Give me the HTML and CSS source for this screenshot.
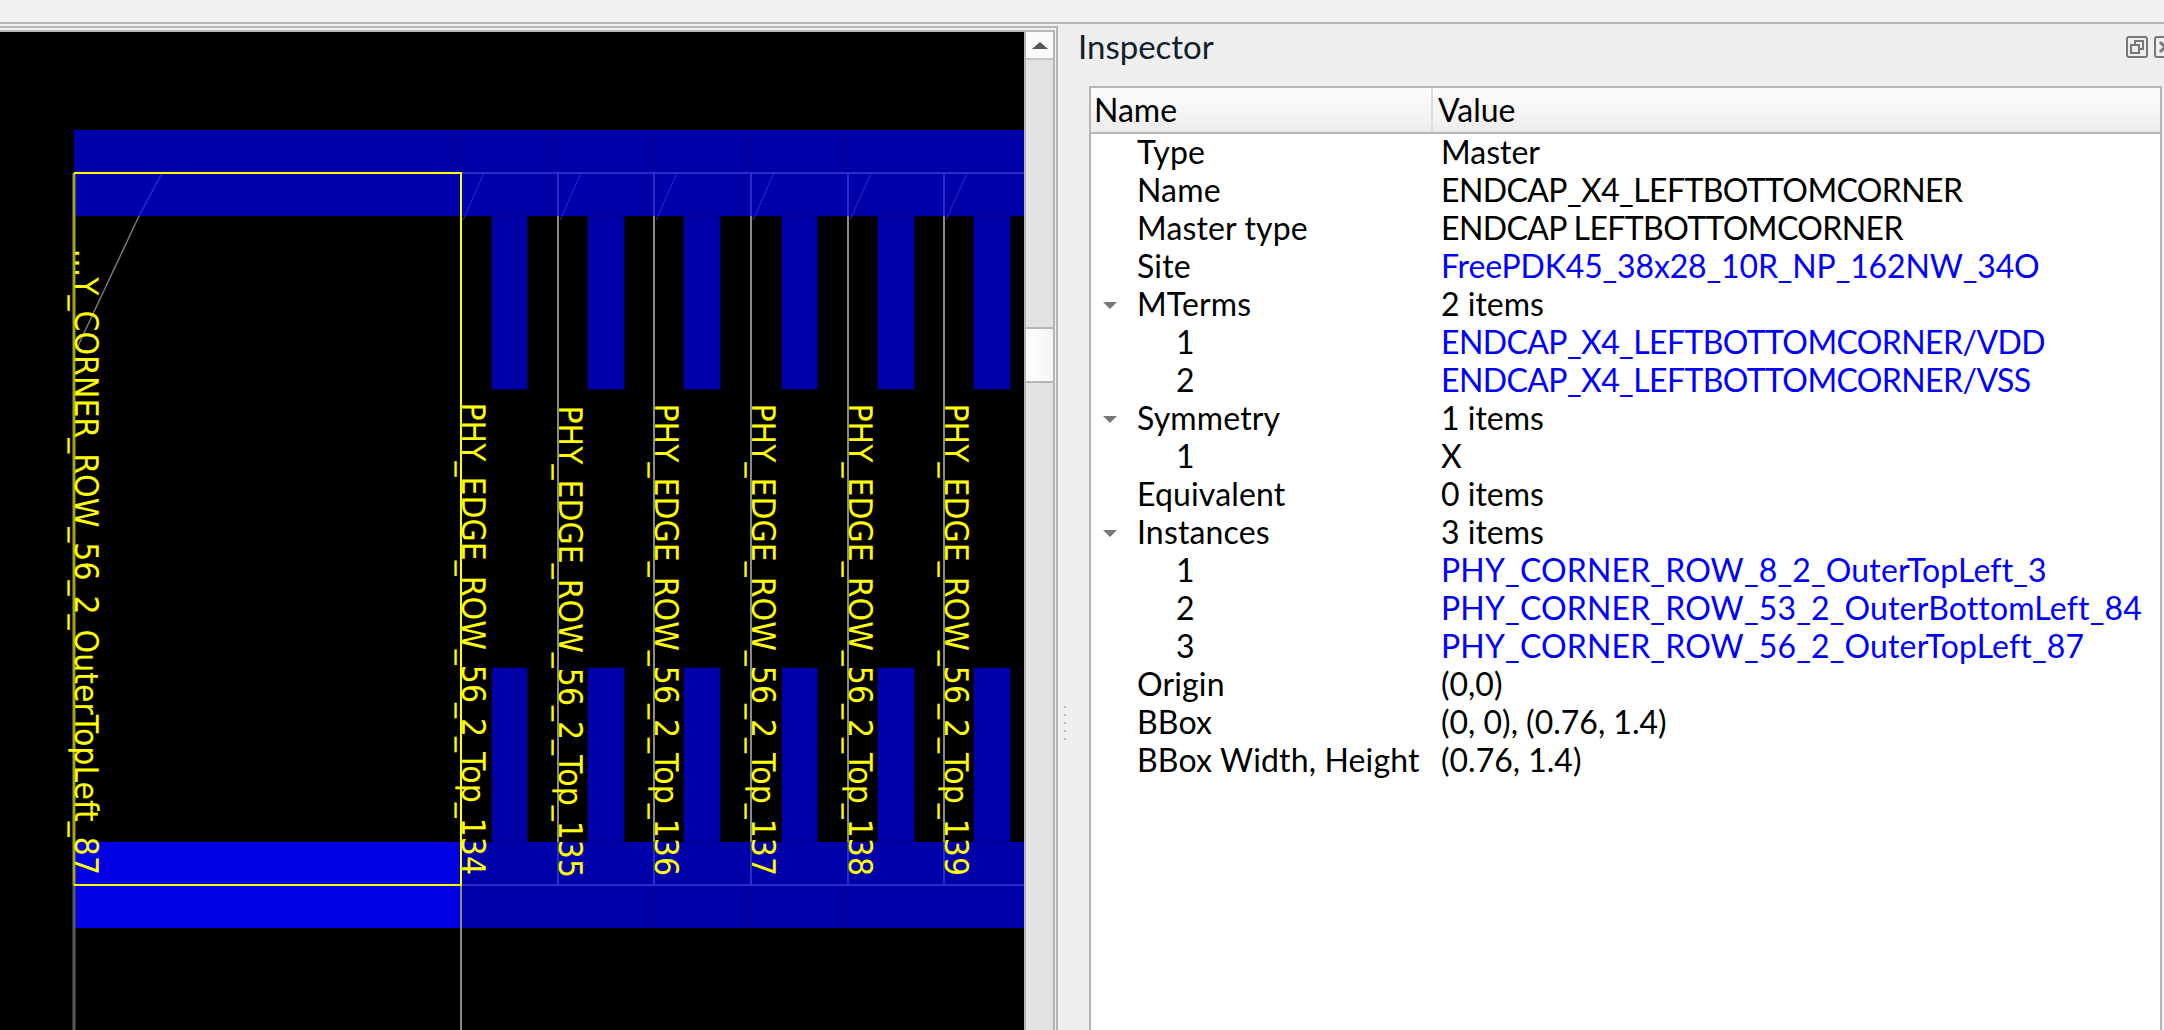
FILE: index.html
```html
<!DOCTYPE html>
<html lang="en">
<head>
    <meta charset="UTF-8">
    <title>Inspector</title>
    <link rel="stylesheet" href="styles.css">
</head>
<body>
    <div class="toolbar"></div>

    <div class="main">
        <div class="viewer">
            <div class="viewer-frame">
                <div class="viewer-inner">
                    <svg class="layout" viewBox="0 32 1024 998" width="1024" height="998">
                        <!-- power rails -->
                        <rect class="metal" x="74" y="130" width="950" height="86"/>
                        <rect class="metal" x="74" y="842" width="950" height="86"/>
                        <rect class="metal-hi" x="74" y="842" width="387" height="86"/>

                        <!-- fingers, top -->
                        <rect class="finger" x="492" y="216" width="35" height="173"/>
                        <rect class="finger" x="588" y="216" width="36" height="173"/>
                        <rect class="finger" x="684" y="216" width="36" height="173"/>
                        <rect class="finger" x="782" y="216" width="35" height="173"/>
                        <rect class="finger" x="878" y="216" width="36" height="173"/>
                        <rect class="finger" x="974" y="216" width="36" height="173"/>

                        <!-- fingers, bottom -->
                        <rect class="finger" x="492" y="668" width="35" height="174"/>
                        <rect class="finger" x="588" y="668" width="36" height="174"/>
                        <rect class="finger" x="684" y="668" width="36" height="174"/>
                        <rect class="finger" x="782" y="668" width="35" height="174"/>
                        <rect class="finger" x="878" y="668" width="36" height="174"/>
                        <rect class="finger" x="974" y="668" width="36" height="174"/>

                        <!-- faint seams in the rails -->
                        <path class="seam" d="M461 130V173M557 130V173M654 130V173M751 130V173M847 130V173M654 885V928M751 885V928M847 885V928M461 885V928"/>

                        <!-- instance outlines -->
                        <path class="outline" d="M558 216V842M654 216V842M751 216V842M848 216V842M944 216V842"/>
                        <path class="outline-blue" d="M558 173V216M654 173V216M751 173V216M848 173V216M944 173V216M558 842V885M654 842V885M751 842V885M848 842V885M944 842V885M461 173H1024M461 885H1024"/>
                        <path class="tick" d="M484 173L463 220M581 173L560 220M677 173L656 220M774 173L753 220M871 173L850 220M967 173L946 220"/>
                        <path class="outline" d="M461 216V1030"/>
                        <path class="outline-dim" d="M74 885V1030"/>
                        <path class="diag-blue" d="M162 173L139 216"/>
                        <path class="diag" d="M139 216L77 348"/>

                        <!-- selected instance -->
                        <path class="select-dim" d="M74 173V885"/>
                        <path class="select" d="M74 173H461V885H74"/>

                        <text class="label" text-anchor="end" transform="translate(75 875) rotate(90) scale(1 1.08)">...Y_CORNER_ROW_56_2_OuterTopLeft_87</text>
                        <text class="label" text-anchor="end" transform="translate(462 875) rotate(90) scale(1 1.08)">PHY_EDGE_ROW_56_2_Top_134</text>
                        <text class="label" text-anchor="end" transform="translate(559 878) rotate(90) scale(1 1.08)">PHY_EDGE_ROW_56_2_Top_135</text>
                        <text class="label" text-anchor="end" transform="translate(655 876) rotate(90) scale(1 1.08)">PHY_EDGE_ROW_56_2_Top_136</text>
                        <text class="label" text-anchor="end" transform="translate(752 876) rotate(90) scale(1 1.08)">PHY_EDGE_ROW_56_2_Top_137</text>
                        <text class="label" text-anchor="end" transform="translate(849 876) rotate(90) scale(1 1.08)">PHY_EDGE_ROW_56_2_Top_138</text>
                        <text class="label" text-anchor="end" transform="translate(945 876) rotate(90) scale(1 1.08)">PHY_EDGE_ROW_56_2_Top_139</text>
                    </svg>
                    <div class="scrollbar">
                        <div class="scroll-up"><span class="arrow-up"></span></div>
                        <div class="scroll-track"></div>
                        <div class="scroll-handle"></div>
                        <div class="scroll-rest"></div>
                    </div>
                </div>
            </div>
        </div>

        <div class="dock">
            <div class="splitter">
                <span></span><span></span><span></span><span></span><span></span>
            </div>
            <div class="dock-body">
                <div class="dock-title">
                    <span class="title-text">Inspector</span>
                    <div class="dock-buttons">
                        <svg width="22" height="22" viewBox="0 0 22 22">
                            <rect class="btn-line" x="1" y="1" width="20" height="20" rx="2"/>
                            <path class="btn-line" d="M9 8V5H17V13H13M5 9H13V17H5Z"/>
                        </svg>
                        <svg width="22" height="22" viewBox="0 0 22 22">
                            <rect class="btn-line" x="1" y="1" width="20" height="20" rx="2"/>
                            <path class="btn-x" d="M6 6L16 16M16 6L6 16"/>
                        </svg>
                    </div>
                </div>
                <div class="tree">
                    <div class="tree-head">
                        <div class="head-name">Name</div>
                        <div class="head-value">Value</div>
                    </div>
                    <div class="row"><div class="name">Type</div><div class="value">Master</div></div>
                    <div class="row"><div class="name">Name</div><div class="value caps">ENDCAP_X4_LEFTBOTTOMCORNER</div></div>
                    <div class="row"><div class="name">Master type</div><div class="value caps">ENDCAP LEFTBOTTOMCORNER</div></div>
                    <div class="row"><div class="name">Site</div><div class="value link site">FreePDK45_38x28_10R_NP_162NW_34O</div></div>
                    <div class="row"><div class="name"><span class="caret"></span>MTerms</div><div class="value">2 items</div></div>
                    <div class="row"><div class="name child">1</div><div class="value link caps">ENDCAP_X4_LEFTBOTTOMCORNER/VDD</div></div>
                    <div class="row"><div class="name child">2</div><div class="value link caps">ENDCAP_X4_LEFTBOTTOMCORNER/VSS</div></div>
                    <div class="row"><div class="name"><span class="caret"></span>Symmetry</div><div class="value">1 items</div></div>
                    <div class="row"><div class="name child">1</div><div class="value">X</div></div>
                    <div class="row"><div class="name">Equivalent</div><div class="value">0 items</div></div>
                    <div class="row"><div class="name"><span class="caret"></span>Instances</div><div class="value">3 items</div></div>
                    <div class="row"><div class="name child">1</div><div class="value link inst">PHY_CORNER_ROW_8_2_OuterTopLeft_3</div></div>
                    <div class="row"><div class="name child">2</div><div class="value link inst">PHY_CORNER_ROW_53_2_OuterBottomLeft_84</div></div>
                    <div class="row"><div class="name child">3</div><div class="value link inst">PHY_CORNER_ROW_56_2_OuterTopLeft_87</div></div>
                    <div class="row"><div class="name">Origin</div><div class="value">(0,0)</div></div>
                    <div class="row"><div class="name">BBox</div><div class="value">(0, 0), (0.76, 1.4)</div></div>
                    <div class="row"><div class="name">BBox Width, Height</div><div class="value">(0.76, 1.4)</div></div>
                </div>
            </div>
        </div>
    </div>
</body>
</html>
```

FILE: styles.css
```css
html, body {
    margin: 0;
    padding: 0;
    height: 100%;
    overflow: hidden;
}

body {
    width: 2164px;
    height: 1030px;
    background: #f0f0f0;
    font-family: 'Lato', sans-serif;
    font-size: 32px;
    color: #000000;
}

.toolbar {
    height: 22px;
    background: #f1f1f1;
    border-bottom: 2px solid #b5b5b5;
}

.main {
    display: flex;
    height: 1006px;
}

/* layout view */

.viewer {
    width: 1058px;
    padding-top: 2px;
    box-sizing: border-box;
    background: #f0f0f0;
}

.viewer-frame {
    height: 100%;
    box-sizing: border-box;
    border-top: 2px solid #b5b5b5;
    border-right: 2px solid #b5b5b5;
    padding: 2px 1px 0 0;
}

.viewer-inner {
    display: flex;
    height: 100%;
    box-sizing: border-box;
    border-top: 2px solid #b5b5b5;
    border-right: 2px solid #b5b5b5;
}

.layout {
    display: block;
    flex: none;
    background: #000000;
}

.metal { fill: #0000aa; }
.metal-hi { fill: #0000e2; }
.finger { fill: #0000aa; stroke: #000088; stroke-width: 1; }
.seam { stroke: #00008c; stroke-width: 1; fill: none; }
.outline { stroke: #8a8a8a; stroke-width: 2; fill: none; }
.outline-dim { stroke: #5a5a5a; stroke-width: 3; fill: none; }
.outline-blue { stroke: #2c2cc8; stroke-width: 2; fill: none; }
.tick { stroke: #2c2cc8; stroke-width: 1; fill: none; }
.diag { stroke: #777777; stroke-width: 1.5; fill: none; }
.diag-blue { stroke: #2c2cc8; stroke-width: 1.5; fill: none; }
.select { stroke: #ffff00; stroke-width: 2; fill: none; }
.select-dim { stroke: #a3a31e; stroke-width: 3; fill: none; }

.label {
    fill: #ffff00;
    font-family: 'DejaVu Sans', sans-serif;
    font-size: 30px;
    text-rendering: geometricPrecision;
}

.scrollbar {
    flex: 1;
    display: flex;
    flex-direction: column;
    border-left: 2px solid #b5b5b5;
    background: #e2e2e2;
}

.scroll-up {
    height: 26px;
    background: #fafafa;
    border-bottom: 2px solid #c4c4c4;
    display: flex;
    align-items: center;
    justify-content: center;
}

.arrow-up {
    width: 0;
    height: 0;
    border-left: 8px solid transparent;
    border-right: 8px solid transparent;
    border-bottom: 7px solid #555555;
}

.scroll-track {
    height: 267px;
}

.scroll-handle {
    height: 52px;
    background: linear-gradient(to right, #ffffff, #f4f4f4);
    border-top: 2px solid #b5b5b5;
    border-bottom: 2px solid #b5b5b5;
}

.scroll-rest {
    flex: 1;
}

/* inspector dock */

.dock {
    flex: 1;
    display: flex;
    background: #eeeeee;
    min-width: 0;
}

.splitter {
    width: 31px;
    flex: none;
    display: flex;
    flex-direction: column;
    align-items: flex-start;
    gap: 6px;
    padding: 682px 0 0 6px;
    box-sizing: border-box;
}

.splitter span {
    width: 2px;
    height: 2px;
    background: #b9b9b9;
}

.dock-body {
    flex: 1;
    display: flex;
    flex-direction: column;
    min-width: 0;
}

.dock-title {
    height: 62px;
    display: flex;
    justify-content: space-between;
    padding-top: 3px;
    box-sizing: border-box;
}

.title-text {
    margin-left: -11px;
    line-height: 38px;
    font-size: 33px;
    color: #10202c;
}

.dock-buttons {
    display: flex;
    gap: 6px;
    margin-top: 9px;
    margin-right: -12px;
}

.btn-line { fill: none; stroke: #777777; stroke-width: 2; }
.btn-x { fill: none; stroke: #777777; stroke-width: 3; }

.tree {
    flex: 1;
    margin-right: 2px;
    background: #ffffff;
    border-top: 2px solid #b5b5b5;
    border-left: 2px solid #b5b5b5;
    border-right: 2px solid #b5b5b5;
}

.tree-head {
    display: flex;
    height: 44px;
    line-height: 44px;
    background: linear-gradient(to bottom, #fbfbfb, #f6f6f6 50%, #ececec);
    border-bottom: 2px solid #b5b5b5;
}

.head-name {
    width: 342px;
    flex: none;
    box-sizing: border-box;
    padding-left: 3px;
    border-right: 2px solid #dcdcdc;
}

.head-value {
    padding-left: 5px;
}

.row {
    display: flex;
    height: 38px;
    line-height: 36px;
    white-space: nowrap;
}

.name {
    width: 350px;
    flex: none;
    padding-left: 46px;
    box-sizing: border-box;
    position: relative;
    letter-spacing: 0.15px;
}

.name.child {
    padding-left: 85px;
}

.link {
    color: #0000ff;
}

.caps {
    letter-spacing: -0.6px;
}

.site {
    letter-spacing: -0.15px;
}

.inst {
    letter-spacing: 0.15px;
}

.caret {
    position: absolute;
    left: 12px;
    top: 16px;
    width: 0;
    height: 0;
    border-left: 7px solid transparent;
    border-right: 7px solid transparent;
    border-top: 7px solid #777777;
}
```
